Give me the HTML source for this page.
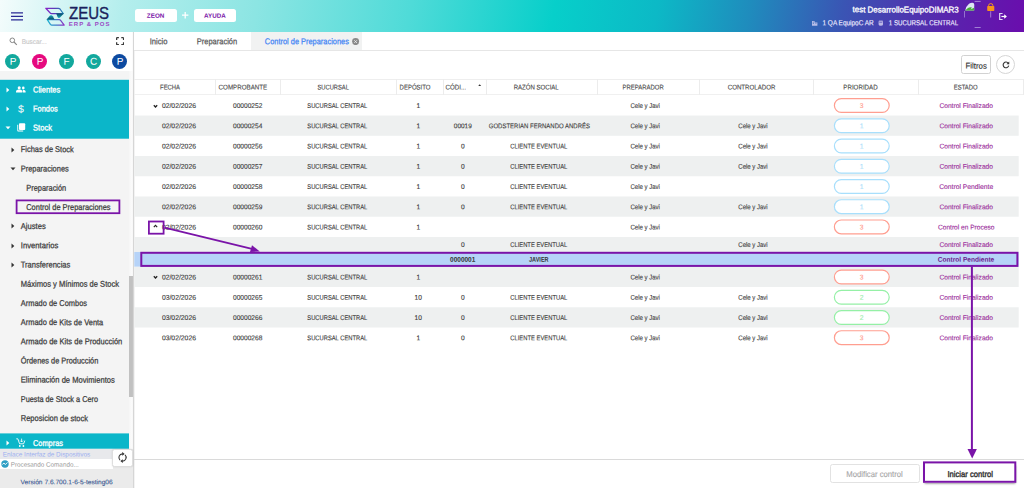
<!DOCTYPE html><html lang="es"><head><meta charset="utf-8"><title>Control de Preparaciones</title><style>
*{box-sizing:border-box}
html,body{margin:0;padding:0}
body{width:1024px;height:488px;position:relative;overflow:hidden;background:#fff;font-family:"Liberation Sans",sans-serif;color:#444}
.abs{position:absolute}
.t{position:absolute;white-space:nowrap;display:block;transform-origin:0 0}
#hdr{position:absolute;left:0;top:0;width:1024px;height:32px;
 background:linear-gradient(100deg,#f4fcfc 0%,#b4eeed 12%,#8ce5e3 25%,#4fdbd8 40%,#07cfca 54%,#0cb9c6 64%,#1f8cbd 73%,#3a55b4 82%,#5a22ad 93%,#6a0dad 100%)}
.hb{position:absolute;top:9px;height:13px;width:42.5px;background:#fff;border-radius:2.5px}
.circ{position:absolute;top:53.5px;width:15px;height:15px;border-radius:50%}
.row{position:absolute;left:134px;width:884.7px}
.sep{position:absolute;top:79px;width:1px;height:16px;background:#ececec}
.pill{position:absolute;left:833.8px;width:56px;height:14.9px;border-radius:7.5px;border:1.2px solid;background:#fff}
.p3{border-color:#ff9e90}
.p1{border-color:#a8dffc}
.p2{border-color:#95f0a6}
</style></head><body>
<div id="hdr">
<svg class="abs" style="left:11px;top:12px" width="12" height="9" viewBox="0 0 12 9"><path d="M0 0.8H12M0 4.3H12M0 7.8H12" stroke="#2a2a94" stroke-width="1.25" fill="none"/></svg>
<svg class="abs" style="left:40px;top:2px" width="76" height="28" viewBox="40 2 76 28">
<defs><linearGradient id="lg1" x1="0" y1="0" x2="1" y2="0"><stop offset="0" stop-color="#8a22c8"/><stop offset="0.5" stop-color="#5a3ab8"/><stop offset="1" stop-color="#1f86b8"/></linearGradient>
<linearGradient id="lg2" x1="0" y1="0" x2="1" y2="0"><stop offset="0" stop-color="#1fb4d0"/><stop offset="0.5" stop-color="#3a7ac8"/><stop offset="1" stop-color="#9030c4"/></linearGradient>
<linearGradient id="lg3" x1="0" y1="0" x2="1" y2="0"><stop offset="0" stop-color="#35c8e0"/><stop offset="1" stop-color="#9a40d0"/></linearGradient>
<linearGradient id="lg4" x1="0" y1="0" x2="0" y2="1"><stop offset="0" stop-color="#0a4a6a"/><stop offset="1" stop-color="#18a8b8"/></linearGradient>
<linearGradient id="lg5" x1="0" y1="1" x2="0" y2="0"><stop offset="0" stop-color="#0a4a6a"/><stop offset="1" stop-color="#18a8b8"/></linearGradient></defs>
<path d="M45.8 8.3H58.4Q59.4 8.3 60 9L63.2 13.5H51.4Q50.6 13.5 50 12.8Z" fill="none" stroke="url(#lg1)" stroke-width="1.25" stroke-linejoin="round"/>
<path d="M47.3 19.6H59.2Q60 19.6 60.6 20.3L64.2 25.1H51.8Q51 25.1 50.4 24.4Z" fill="none" stroke="url(#lg2)" stroke-width="1.25" stroke-linejoin="round"/>
<path d="M56.2 13.6H63.8L60 17.6Q58.6 18.6 57.6 17Z" fill="url(#lg4)"/>
<path d="M54.6 19.4H46.6L50 15.6Q51.6 14.6 52.8 16.2Z" fill="url(#lg5)"/>
<text x="69" y="18.6" font-family="Liberation Sans, sans-serif" font-size="16.4" fill="#1a1f5c" stroke="#1a1f5c" stroke-width="0.35" textLength="40" lengthAdjust="spacingAndGlyphs">ZEUS</text>
<path d="M69.7 13.1H85" stroke="url(#lg3)" stroke-width="0.8" opacity="0.85"/>
<text x="68.8" y="25.7" font-family="Liberation Sans, sans-serif" font-weight="bold" font-size="6" fill="#9a48c4" textLength="40.6" lengthAdjust="spacing">ERP &amp; POS</text>
</svg>
<div class="hb" style="left:134.5px"></div>
<span class="t" style="left:146px;top:11px;font-size:6.2px;line-height:7.44px;color:#7a14a8;transform:matrix(1.0219,0.0006,0,1,0.80,0.75);font-weight:bold;">ZEON</span>
<svg class="abs" style="left:182.2px;top:12.2px" width="6.4" height="6.4" viewBox="0 0 7 7"><path d="M3.5 0V7M0 3.5H7" stroke="#fff" stroke-width="1.4"/></svg>
<div class="hb" style="left:193.5px"></div>
<span class="t" style="left:204px;top:11px;font-size:6.2px;line-height:7.44px;color:#7a14a8;transform:matrix(1.0058,0.0006,0,1,0.10,0.75);font-weight:bold;">AYUDA</span>
<span class="t" style="left:852px;top:4px;font-size:8.4px;line-height:10.08px;color:#fff;transform:matrix(0.9514,0.0006,0,1,0.50,0.37);-webkit-text-stroke:0.3px #fff;">test DesarrolloEquipoDIMAR3</span>
<span class="t" style="left:822px;top:19px;font-size:7.3px;line-height:8.76px;color:#eeeaff;transform:matrix(0.8823,0.0006,0,1,0.50,0.16);-webkit-text-stroke:0.15px #eeeaff;">1 QA EquipoC AR</span>
<span class="t" style="left:888px;top:19px;font-size:7.3px;line-height:8.76px;color:#eeeaff;transform:matrix(0.8485,0.0006,0,1,0.80,0.16);-webkit-text-stroke:0.15px #eeeaff;">1 SUCURSAL CENTRAL</span>
<svg class="abs" style="left:811px;top:19px" width="76" height="8" viewBox="0 0 76 8" fill="#d9d4f4" opacity="0.8">
<path d="M1 6.8V2H3.6V3.6H6.4V6.8Z M1.8 2.8V3.5H2.8V2.8Z M1.8 4.3V5H2.8V4.3Z M4.3 4.4V5.1H5.5V4.4Z" fill-rule="evenodd"/>
<path d="M67.6 2.2H72V5.6Q72 6.8 69.8 6.8Q67.6 6.8 67.6 5.6Z M68.3 3.4V4.1H71.3V3.4Z" fill-rule="evenodd"/><path d="M67.9 1.6H71.7V2.2H67.9Z"/>
</svg>
<svg class="abs" style="left:958px;top:0" width="66" height="32" viewBox="958 0 66 32">
<defs><clipPath id="fc"><path d="M965.2 10.6 Q966 6.2 969 3.8 Q971.6 2 973.6 3 Q974.8 4.4 974.2 7 L974.2 10.6Z"/></clipPath></defs>
<g clip-path="url(#fc)"><rect x="964" y="2" width="12" height="9" fill="#dde6f4"/>
<path d="M964.5 11 L968 8 Q970 6.6 972 7.6 L970.6 9.6 L974.4 7.4 V11Z" fill="#4bb03a"/></g>
<path d="M964.5 11 V17.5" stroke="#cfc6ee" stroke-width="0.5"/>
<path d="M974.6 1.4 H980.7 M974.6 27.5 H980.7" stroke="#cfc6ee" stroke-width="0.6"/>
<rect x="987.2" y="6" width="7.1" height="4.9" rx="0.7" fill="#f7941d"/>
<path d="M988.6 6.4 V5.6 a2.15 2 0 0 1 4.3 0 V6.4" stroke="#f7941d" stroke-width="1" fill="none"/>
<path d="M990.7 11.3 V17.5" stroke="#e8defa" stroke-width="0.5"/>
<path d="M1002.6 13.5 H999.7 V19.5 H1002.6" stroke="#e2d6f6" stroke-width="1.2" fill="none"/>
<path d="M1001.4 16.5 H1004.6" stroke="#fff" stroke-width="1.2"/>
<path d="M1004.2 14.2 L1006.9 16.5 L1004.2 18.8Z" fill="#fff"/>
</svg>
</div>
<div class="abs" style="left:0;top:32px;width:133px;height:456px;background:#f4f4f4"></div>
<div class="abs" style="left:0;top:32px;width:133px;height:39px;background:#fff"></div>
<svg class="abs" style="left:9px;top:37px" width="9" height="9" viewBox="0 0 9 9"><circle cx="3.3" cy="3.3" r="2.3" stroke="#888" stroke-width="1" fill="none"/><path d="M5 5L7.8 7.8" stroke="#888" stroke-width="1.1"/></svg>
<span class="t" style="left:21px;top:38px;font-size:6.8px;line-height:8.16px;color:#c8c8c8;transform:matrix(0.9450,0.0006,0,1,0.70,0.03);-webkit-text-stroke:0.12px #c8c8c8;">Buscar...</span>
<svg class="abs" style="left:116.2px;top:37.2px" width="8.2" height="8.2" viewBox="0 0 9 9"><path d="M0.7 3.2V1.4Q0.7 0.7 1.4 0.7H3.2M5.8 0.7H7.6Q8.3 0.7 8.3 1.4V3.2M8.3 5.8V7.6Q8.3 8.3 7.6 8.3H5.8M3.2 8.3H1.4Q0.7 8.3 0.7 7.6V5.8" stroke="#3a3a3a" stroke-width="1.4" fill="none"/></svg>
<div class="circ" style="left:5.4px;background:#12a89d"></div>
<span class="t" style="left:9px;top:55px;font-size:10px;line-height:12.0px;color:#fff;transform:matrix(1.0000,0.0006,0,1,0.66,0.70);">P</span>
<div class="circ" style="left:32.4px;background:#e6097e"></div>
<span class="t" style="left:36px;top:55px;font-size:10px;line-height:12.0px;color:#fff;transform:matrix(1.0000,0.0006,0,1,0.66,0.70);">P</span>
<div class="circ" style="left:59px;background:#12a89d"></div>
<span class="t" style="left:63px;top:55px;font-size:10px;line-height:12.0px;color:#fff;transform:matrix(1.0000,0.0006,0,1,0.55,0.70);">F</span>
<div class="circ" style="left:85.9px;background:#12a89d"></div>
<span class="t" style="left:89px;top:55px;font-size:10px;line-height:12.0px;color:#fff;transform:matrix(1.0000,0.0006,0,1,0.89,0.70);">C</span>
<div class="circ" style="left:112.4px;background:#0d4aa0"></div>
<span class="t" style="left:116px;top:55px;font-size:10px;line-height:12.0px;color:#fff;transform:matrix(1.0000,0.0006,0,1,0.67,0.70);">P</span>
<svg class="abs" style="left:0;top:0" width="140" height="488" viewBox="0 0 140 488"><rect x="0" y="79.8" width="129" height="58.9" fill="#0bb6c9"/><rect x="0" y="433.4" width="129" height="15.3" fill="#0bb6c9"/></svg>
<svg class="abs" style="left:6px;top:86.5px" width="4" height="6" viewBox="0 0 4 6"><path d="M0.5 0.5L3.3 3L0.5 5.5Z" fill="#fff"/></svg>
<svg class="abs" style="left:16px;top:85.5px" width="10" height="7" viewBox="0 0 10 7"><circle cx="3.2" cy="1.7" r="1.5" fill="#fff"/><circle cx="7.3" cy="1.9" r="1.3" fill="#fff"/><path d="M0 6.5V5.3C0 4.2 2 3.6 3.2 3.6S6.4 4.2 6.4 5.3V6.5Z" fill="#fff"/><path d="M7 6.5V5.2C7 4.6 6.7 4.1 6.3 3.8 7.6 3.6 9.6 4.2 9.6 5.3V6.5Z" fill="#fff"/></svg>
<span class="t" style="left:33px;top:84px;font-size:8.5px;line-height:10.2px;color:#fff;transform:matrix(0.8874,0.0006,0,1,0.00,0.40);-webkit-text-stroke:0.3px #fff;">Clientes</span>
<svg class="abs" style="left:6px;top:105.5px" width="4" height="6" viewBox="0 0 4 6"><path d="M0.5 0.5L3.3 3L0.5 5.5Z" fill="#fff"/></svg>
<span class="t" style="left:18px;top:102px;font-size:10.5px;line-height:12.6px;color:#fff;transform:matrix(1.0000,0.0006,0,1,0.08,0.39);">$</span>
<span class="t" style="left:33px;top:103px;font-size:8.5px;line-height:10.2px;color:#fff;transform:matrix(0.8730,0.0006,0,1,0.00,0.40);-webkit-text-stroke:0.3px #fff;">Fondos</span>
<svg class="abs" style="left:5px;top:126px" width="6" height="4" viewBox="0 0 6 4"><path d="M0.5 0.5H5.5L3 3.3Z" fill="#fff"/></svg>
<svg class="abs" style="left:16.5px;top:123px" width="9" height="9" viewBox="0 0 9 9"><path d="M0.3 1.8V7.6Q0.3 8.5 1.2 8.5H6.2V7.6H1.2V1.8Z" fill="#fff"/><rect x="2" y="0.3" width="6.2" height="6.6" rx="0.9" fill="#fff"/></svg>
<span class="t" style="left:33px;top:122px;font-size:8.5px;line-height:10.2px;color:#fff;transform:matrix(0.8938,0.0006,0,1,0.00,0.40);-webkit-text-stroke:0.3px #fff;">Stock</span>
<span class="t" style="left:20px;top:144px;font-size:8.5px;line-height:10.2px;color:#3c3c3c;transform:matrix(0.8764,0.0006,0,1,0.75,0.10);-webkit-text-stroke:0.25px #3c3c3c;">Fichas de Stock</span>
<svg class="abs" style="left:10.5px;top:146.5px" width="4" height="6" viewBox="0 0 4 6"><path d="M0.5 0.5L3.3 3L0.5 5.5Z" fill="#333"/></svg>
<span class="t" style="left:20px;top:163px;font-size:8.5px;line-height:10.2px;color:#3c3c3c;transform:matrix(0.8757,0.0006,0,1,0.75,0.40);-webkit-text-stroke:0.25px #3c3c3c;">Preparaciones</span>
<svg class="abs" style="left:9.5px;top:166.8px" width="6" height="4" viewBox="0 0 6 4"><path d="M0.5 0.5H5.5L3 3.3Z" fill="#333"/></svg>
<span class="t" style="left:26px;top:182px;font-size:8.5px;line-height:10.2px;color:#3c3c3c;transform:matrix(0.8727,0.0006,0,1,0.25,0.70);-webkit-text-stroke:0.25px #3c3c3c;">Preparación</span>
<span class="t" style="left:26px;top:201px;font-size:8.5px;line-height:10.2px;color:#3c3c3c;transform:matrix(0.8741,0.0006,0,1,0.25,0.90);-webkit-text-stroke:0.25px #3c3c3c;">Control de Preparaciones</span>
<span class="t" style="left:20px;top:220px;font-size:8.5px;line-height:10.2px;color:#3c3c3c;transform:matrix(0.8969,0.0006,0,1,0.75,0.90);-webkit-text-stroke:0.25px #3c3c3c;">Ajustes</span>
<svg class="abs" style="left:10.5px;top:223.3px" width="4" height="6" viewBox="0 0 4 6"><path d="M0.5 0.5L3.3 3L0.5 5.5Z" fill="#333"/></svg>
<span class="t" style="left:20px;top:240px;font-size:8.5px;line-height:10.2px;color:#3c3c3c;transform:matrix(0.9019,0.0006,0,1,0.75,0.20);-webkit-text-stroke:0.25px #3c3c3c;">Inventarios</span>
<svg class="abs" style="left:10.5px;top:242.60000000000002px" width="4" height="6" viewBox="0 0 4 6"><path d="M0.5 0.5L3.3 3L0.5 5.5Z" fill="#333"/></svg>
<span class="t" style="left:20px;top:259px;font-size:8.5px;line-height:10.2px;color:#3c3c3c;transform:matrix(0.8855,0.0006,0,1,0.75,0.40);-webkit-text-stroke:0.25px #3c3c3c;">Transferencias</span>
<svg class="abs" style="left:10.5px;top:261.8px" width="4" height="6" viewBox="0 0 4 6"><path d="M0.5 0.5L3.3 3L0.5 5.5Z" fill="#333"/></svg>
<span class="t" style="left:20px;top:278px;font-size:8.5px;line-height:10.2px;color:#3c3c3c;transform:matrix(0.8889,0.0006,0,1,0.75,0.70);-webkit-text-stroke:0.25px #3c3c3c;">Máximos y Mínimos de Stock</span>
<span class="t" style="left:20px;top:297px;font-size:8.5px;line-height:10.2px;color:#3c3c3c;transform:matrix(0.8764,0.0006,0,1,0.75,0.90);-webkit-text-stroke:0.25px #3c3c3c;">Armado de Combos</span>
<span class="t" style="left:20px;top:317px;font-size:8.5px;line-height:10.2px;color:#3c3c3c;transform:matrix(0.8774,0.0006,0,1,0.75,0.10);-webkit-text-stroke:0.25px #3c3c3c;">Armado de Kits de Venta</span>
<span class="t" style="left:20px;top:336px;font-size:8.5px;line-height:10.2px;color:#3c3c3c;transform:matrix(0.8840,0.0006,0,1,0.75,0.20);-webkit-text-stroke:0.25px #3c3c3c;">Armado de Kits de Producción</span>
<span class="t" style="left:20px;top:355px;font-size:8.5px;line-height:10.2px;color:#3c3c3c;transform:matrix(0.8678,0.0006,0,1,0.75,0.40);-webkit-text-stroke:0.25px #3c3c3c;">Órdenes de Producción</span>
<span class="t" style="left:20px;top:374px;font-size:8.5px;line-height:10.2px;color:#3c3c3c;transform:matrix(0.8923,0.0006,0,1,0.75,0.60);-webkit-text-stroke:0.25px #3c3c3c;">Eliminación de Movimientos</span>
<span class="t" style="left:20px;top:393px;font-size:8.5px;line-height:10.2px;color:#3c3c3c;transform:matrix(0.8605,0.0006,0,1,0.75,0.90);-webkit-text-stroke:0.25px #3c3c3c;">Puesta de Stock a Cero</span>
<span class="t" style="left:20px;top:413px;font-size:8.5px;line-height:10.2px;color:#3c3c3c;transform:matrix(0.8841,0.0006,0,1,0.75,0.10);-webkit-text-stroke:0.25px #3c3c3c;">Reposicion de stock</span>
<svg class="abs" style="left:6px;top:440px" width="4" height="6" viewBox="0 0 4 6"><path d="M0.5 0.5L3.3 3L0.5 5.5Z" fill="#fff"/></svg>
<svg class="abs" style="left:16px;top:437.5px" width="10" height="10" viewBox="0 0 10 10"><path d="M0.3 0.8H1.8L3.6 5.8H7.6L8.8 2.6" stroke="#fff" stroke-width="0.9" fill="none"/><circle cx="3.8" cy="8" r="0.9" fill="#fff"/><circle cx="7.4" cy="8" r="0.9" fill="#fff"/><path d="M5.6 0.6V4M4.2 2.6L5.6 4L7 2.6" stroke="#fff" stroke-width="0.8" fill="none"/></svg>
<span class="t" style="left:33px;top:437px;font-size:8.5px;line-height:10.2px;color:#fff;transform:matrix(0.8700,0.0006,0,1,0.00,0.90);-webkit-text-stroke:0.3px #fff;">Compras</span>
<div class="abs" style="left:129px;top:71px;width:4px;height:378px;background:linear-gradient(90deg,#f6f6f6,#fdfdfd)"></div>
<div class="abs" style="left:129.3px;top:276px;width:3.6px;height:121px;background:#c1c1c1"></div>
<svg class="abs" style="left:130px;top:32px" width="6" height="456" viewBox="130 32 6 456"><rect x="132.9" y="32" width="1.4" height="456" fill="#d6d6d6"/></svg>
<div class="abs" style="left:0;top:449px;width:133px;height:39px;background:#ebebeb"></div>
<div class="abs" style="left:0;top:449px;width:113px;height:10px;background:#e8e9ec"></div>
<span class="t" style="left:2px;top:450px;font-size:6.6px;line-height:7.92px;color:#9db0f0;transform:matrix(0.9696,0.0006,0,1,0.80,0.56);">Enlace Interfaz de Dispositivos</span>
<div class="abs" style="left:0;top:459px;width:113px;height:9.5px;background:#fff"></div>
<svg class="abs" style="left:0.5px;top:460px" width="8" height="8" viewBox="0 0 8 8"><circle cx="4" cy="4" r="3.7" fill="#2f9fc4"/><path d="M1.3 4.5L3 3L4.3 4.6L6.5 2.4" stroke="#fff" stroke-width="0.9" fill="none"/></svg>
<span class="t" style="left:10px;top:460px;font-size:6.6px;line-height:7.92px;color:#999;transform:matrix(0.9554,0.0006,0,1,0.70,0.66);">Procesando Comando...</span>
<div class="abs" style="left:112.3px;top:448.8px;width:20.8px;height:18.4px;background:#fff;border:1px solid #dedede;border-radius:2.5px;box-shadow:0 0 1.5px rgba(0,0,0,.15)"></div>
<svg class="abs" style="left:117.1px;top:452.4px" width="11" height="11" viewBox="0 0 11 11"><path d="M2.95 8.05A3.6 3.6 0 0 1 5.5 1.9M8.05 2.95A3.6 3.6 0 0 1 5.5 9.1" stroke="#333" stroke-width="1.1" fill="none"/><path d="M5.2 0.1L7.7 1.9L5.2 3.7ZM5.8 7.3L3.3 9.1L5.8 10.9Z" fill="#333"/></svg>
<span class="t" style="left:20px;top:478px;font-size:6.6px;line-height:7.92px;color:#35558f;transform:matrix(1.0022,0.0006,0,1,0.50,0.26);-webkit-text-stroke:0.1px #35558f;">Versión 7.6.700.1-6-5-testing06</span>
<div class="abs" style="left:134px;top:32px;width:890px;height:18.9px;background:#fff;border-bottom:1px solid #e6e6e6"></div>
<div class="abs" style="left:251.2px;top:32px;width:111.3px;height:18.2px;background:#f1f2f2"></div>
<span class="t" style="left:149px;top:36px;font-size:8.5px;line-height:10.2px;color:#5a5a5a;transform:matrix(0.8970,0.0006,0,1,0.70,0.30);-webkit-text-stroke:0.25px #5a5a5a;">Inicio</span>
<span class="t" style="left:196px;top:36px;font-size:8.5px;line-height:10.2px;color:#5a5a5a;transform:matrix(0.8793,0.0006,0,1,0.80,0.30);-webkit-text-stroke:0.25px #5a5a5a;">Preparación</span>
<span class="t" style="left:264px;top:36px;font-size:8.5px;line-height:10.2px;color:#4285f4;transform:matrix(0.8725,0.0006,0,1,0.80,0.30);-webkit-text-stroke:0.25px #4285f4;">Control de Preparaciones</span>
<svg class="abs" style="left:352.4px;top:37.7px" width="7.2" height="7.2" viewBox="0 0 7 7"><circle cx="3.5" cy="3.5" r="3.4" fill="#8a8a8a"/><path d="M2.2 2.2L4.8 4.8M4.8 2.2L2.2 4.8" stroke="#f3f3f3" stroke-width="0.8"/></svg>
<div class="abs" style="left:961px;top:55.3px;width:30.3px;height:19.2px;border:1px solid #d2d2d2;border-radius:2.5px"></div>
<span class="t" style="left:965px;top:61px;font-size:8.3px;line-height:9.96px;color:#333;transform:matrix(0.9383,0.0006,0,1,0.60,0.62);-webkit-text-stroke:0.15px #333;">Filtros</span>
<div class="abs" style="left:996.3px;top:55.3px;width:19.2px;height:19.2px;border:1px solid #d6d6d6;border-radius:50%"></div>
<svg class="abs" style="left:1002px;top:60.8px" width="7.8" height="7.8" viewBox="0 0 9 9"><path d="M7.3 2.6A3.3 3.3 0 1 0 7.8 5.4" stroke="#333" stroke-width="1.25" fill="none"/><path d="M8.4 0.5V3.8H5.1Z" fill="#333"/></svg>
<div class="abs" style="left:134px;top:78.6px;width:890px;height:16.4px;border-top:1px solid #eeeeee;border-bottom:1px solid #f0f0f0"></div>
<div class="sep" style="left:215.1px"></div>
<div class="sep" style="left:280.0px"></div>
<div class="sep" style="left:396.1px"></div>
<div class="sep" style="left:443.2px"></div>
<div class="sep" style="left:485.8px"></div>
<div class="sep" style="left:596.5px"></div>
<div class="sep" style="left:699.1px"></div>
<div class="sep" style="left:813.1px"></div>
<div class="sep" style="left:917.9px"></div>
<div class="sep" style="left:1022.5px"></div>
<span class="t" style="left:160px;top:83px;font-size:6.8px;line-height:8.16px;color:#4a4a4a;transform:matrix(0.8635,0.0006,0,1,0.05,0.58);-webkit-text-stroke:0.12px #4a4a4a;">FECHA</span>
<span class="t" style="left:218px;top:83px;font-size:6.8px;line-height:8.16px;color:#4a4a4a;transform:matrix(0.9123,0.0006,0,1,0.60,0.58);-webkit-text-stroke:0.12px #4a4a4a;">COMPROBANTE</span>
<span class="t" style="left:317px;top:83px;font-size:6.8px;line-height:8.16px;color:#4a4a4a;transform:matrix(0.8506,0.0006,0,1,0.45,0.58);-webkit-text-stroke:0.12px #4a4a4a;">SUCURSAL</span>
<span class="t" style="left:399px;top:83px;font-size:6.8px;line-height:8.16px;color:#4a4a4a;transform:matrix(0.8824,0.0006,0,1,0.55,0.58);-webkit-text-stroke:0.12px #4a4a4a;">DEPÓSITO</span>
<span class="t" style="left:445px;top:83px;font-size:6.8px;line-height:8.16px;color:#4a4a4a;transform:matrix(0.9000,0.0006,0,1,0.60,0.58);-webkit-text-stroke:0.12px #4a4a4a;">CÓDI...</span>
<svg class="abs" style="left:478.4px;top:84px" width="3.4" height="2.4" viewBox="0 0 4 3"><path d="M0 2.8L2 0.2L4 2.8Z" fill="#333"/></svg>
<span class="t" style="left:513px;top:83px;font-size:6.8px;line-height:8.16px;color:#4a4a4a;transform:matrix(0.8907,0.0006,0,1,0.65,0.58);-webkit-text-stroke:0.12px #4a4a4a;">RAZÓN SOCIAL</span>
<span class="t" style="left:622px;top:83px;font-size:6.8px;line-height:8.16px;color:#4a4a4a;transform:matrix(0.8746,0.0006,0,1,0.60,0.58);-webkit-text-stroke:0.12px #4a4a4a;">PREPARADOR</span>
<span class="t" style="left:727px;top:83px;font-size:6.8px;line-height:8.16px;color:#4a4a4a;transform:matrix(0.9037,0.0006,0,1,0.70,0.58);-webkit-text-stroke:0.12px #4a4a4a;">CONTROLADOR</span>
<span class="t" style="left:843px;top:83px;font-size:6.8px;line-height:8.16px;color:#4a4a4a;transform:matrix(0.9105,0.0006,0,1,0.30,0.58);-webkit-text-stroke:0.12px #4a4a4a;">PRIORIDAD</span>
<span class="t" style="left:953px;top:83px;font-size:6.8px;line-height:8.16px;color:#4a4a4a;transform:matrix(0.8668,0.0006,0,1,0.80,0.58);-webkit-text-stroke:0.12px #4a4a4a;">ESTADO</span>
<svg class="abs" style="left:0;top:0" width="1024" height="488" viewBox="0 0 1024 488"><rect x="134.3" y="115.54" width="884.4" height="20.24" fill="#eef0f0"/><rect x="134.3" y="156.02" width="884.4" height="20.24" fill="#eef0f0"/><rect x="134.3" y="196.50" width="884.4" height="20.24" fill="#eef0f0"/><rect x="134.3" y="236.98" width="884.4" height="15.00" fill="#eef0f0"/><rect x="134.3" y="251.98" width="884.4" height="14.80" fill="#b6d3f8"/><rect x="134.3" y="266.78" width="884.4" height="20.24" fill="#eef0f0"/><rect x="134.3" y="307.26" width="884.4" height="20.24" fill="#eef0f0"/><rect x="834.4" y="98.57" width="54.8" height="13.8" rx="6.9" fill="#fff" stroke="#ff9e90" stroke-width="1.2"/><rect x="834.4" y="118.81" width="54.8" height="13.8" rx="6.9" fill="#fff" stroke="#a8dffc" stroke-width="1.2"/><rect x="834.4" y="139.05" width="54.8" height="13.8" rx="6.9" fill="#fff" stroke="#a8dffc" stroke-width="1.2"/><rect x="834.4" y="159.29" width="54.8" height="13.8" rx="6.9" fill="#fff" stroke="#a8dffc" stroke-width="1.2"/><rect x="834.4" y="179.53" width="54.8" height="13.8" rx="6.9" fill="#fff" stroke="#a8dffc" stroke-width="1.2"/><rect x="834.4" y="199.77" width="54.8" height="13.8" rx="6.9" fill="#fff" stroke="#a8dffc" stroke-width="1.2"/><rect x="834.4" y="220.01" width="54.8" height="13.8" rx="6.9" fill="#fff" stroke="#ff9e90" stroke-width="1.2"/><rect x="834.4" y="270.05" width="54.8" height="13.8" rx="6.9" fill="#fff" stroke="#ff9e90" stroke-width="1.2"/><rect x="834.4" y="290.29" width="54.8" height="13.8" rx="6.9" fill="#fff" stroke="#95f0a6" stroke-width="1.2"/><rect x="834.4" y="310.53" width="54.8" height="13.8" rx="6.9" fill="#fff" stroke="#95f0a6" stroke-width="1.2"/><rect x="834.4" y="330.77" width="54.8" height="13.8" rx="6.9" fill="#fff" stroke="#ff9e90" stroke-width="1.2"/></svg>
<svg class="abs" style="left:153.2px;top:103.97px" width="5" height="4.4" viewBox="0 0 5 4.4"><path d="M0.8 1.3L2.5 3L4.2 1.3" stroke="#222" stroke-width="1.35" fill="none"/></svg>
<span class="t" style="left:161px;top:102px;font-size:6.8px;line-height:8.16px;color:#3e3e3e;transform:matrix(1.0020,0.0006,0,1,0.90,0.00);-webkit-text-stroke:0.12px #3e3e3e;">02/02/2026</span>
<span class="t" style="left:233px;top:102px;font-size:6.8px;line-height:8.16px;color:#3e3e3e;transform:matrix(0.9684,0.0006,0,1,0.05,0.00);-webkit-text-stroke:0.12px #3e3e3e;">00000252</span>
<span class="t" style="left:307px;top:102px;font-size:6.8px;line-height:8.16px;color:#3e3e3e;transform:matrix(0.8522,0.0006,0,1,0.30,0.00);-webkit-text-stroke:0.12px #3e3e3e;">SUCURSAL CENTRAL</span>
<span class="t" style="left:416px;top:102px;font-size:6.8px;line-height:8.16px;color:#3e3e3e;transform:matrix(0.9784,0.0006,0,1,0.45,0.00);-webkit-text-stroke:0.12px #3e3e3e;">1</span>
<span class="t" style="left:630px;top:102px;font-size:6.8px;line-height:8.16px;color:#3e3e3e;transform:matrix(0.8840,0.0006,0,1,0.50,0.00);-webkit-text-stroke:0.12px #3e3e3e;">Cele y Javi</span>
<span class="t" style="left:859px;top:102px;font-size:6.8px;line-height:8.16px;color:#ffa192;transform:matrix(1.0000,0.0006,0,1,0.71,0.00);-webkit-text-stroke:0.12px #ffa192;">3</span>
<span class="t" style="left:939px;top:102px;font-size:6.8px;line-height:8.16px;color:#9c2f9c;transform:matrix(0.9780,0.0006,0,1,0.40,0.00);-webkit-text-stroke:0.12px #9c2f9c;">Control Finalizado</span>
<span class="t" style="left:161px;top:122px;font-size:6.8px;line-height:8.16px;color:#3e3e3e;transform:matrix(1.0020,0.0006,0,1,0.90,0.24);-webkit-text-stroke:0.12px #3e3e3e;">02/02/2026</span>
<span class="t" style="left:233px;top:122px;font-size:6.8px;line-height:8.16px;color:#3e3e3e;transform:matrix(0.9684,0.0006,0,1,0.05,0.24);-webkit-text-stroke:0.12px #3e3e3e;">00000254</span>
<span class="t" style="left:307px;top:122px;font-size:6.8px;line-height:8.16px;color:#3e3e3e;transform:matrix(0.8522,0.0006,0,1,0.30,0.24);-webkit-text-stroke:0.12px #3e3e3e;">SUCURSAL CENTRAL</span>
<span class="t" style="left:416px;top:122px;font-size:6.8px;line-height:8.16px;color:#3e3e3e;transform:matrix(0.9784,0.0006,0,1,0.45,0.24);-webkit-text-stroke:0.12px #3e3e3e;">1</span>
<span class="t" style="left:453px;top:122px;font-size:6.8px;line-height:8.16px;color:#3e3e3e;transform:matrix(0.9519,0.0006,0,1,0.80,0.24);-webkit-text-stroke:0.12px #3e3e3e;">00019</span>
<span class="t" style="left:488px;top:122px;font-size:6.8px;line-height:8.16px;color:#3e3e3e;transform:matrix(0.8811,0.0006,0,1,0.80,0.24);-webkit-text-stroke:0.12px #3e3e3e;">GODSTERIAN FERNANDO ANDRÉS</span>
<span class="t" style="left:630px;top:122px;font-size:6.8px;line-height:8.16px;color:#3e3e3e;transform:matrix(0.8840,0.0006,0,1,0.50,0.24);-webkit-text-stroke:0.12px #3e3e3e;">Cele y Javi</span>
<span class="t" style="left:738px;top:122px;font-size:6.8px;line-height:8.16px;color:#3e3e3e;transform:matrix(0.8840,0.0006,0,1,0.30,0.24);-webkit-text-stroke:0.12px #3e3e3e;">Cele y Javi</span>
<span class="t" style="left:859px;top:122px;font-size:6.8px;line-height:8.16px;color:#b0e2fc;transform:matrix(1.0000,0.0006,0,1,0.71,0.24);-webkit-text-stroke:0.12px #b0e2fc;">1</span>
<span class="t" style="left:939px;top:122px;font-size:6.8px;line-height:8.16px;color:#9c2f9c;transform:matrix(0.9780,0.0006,0,1,0.40,0.24);-webkit-text-stroke:0.12px #9c2f9c;">Control Finalizado</span>
<span class="t" style="left:161px;top:142px;font-size:6.8px;line-height:8.16px;color:#3e3e3e;transform:matrix(1.0020,0.0006,0,1,0.90,0.48);-webkit-text-stroke:0.12px #3e3e3e;">02/02/2026</span>
<span class="t" style="left:233px;top:142px;font-size:6.8px;line-height:8.16px;color:#3e3e3e;transform:matrix(0.9684,0.0006,0,1,0.05,0.48);-webkit-text-stroke:0.12px #3e3e3e;">00000256</span>
<span class="t" style="left:307px;top:142px;font-size:6.8px;line-height:8.16px;color:#3e3e3e;transform:matrix(0.8522,0.0006,0,1,0.30,0.48);-webkit-text-stroke:0.12px #3e3e3e;">SUCURSAL CENTRAL</span>
<span class="t" style="left:416px;top:142px;font-size:6.8px;line-height:8.16px;color:#3e3e3e;transform:matrix(0.9784,0.0006,0,1,0.45,0.48);-webkit-text-stroke:0.12px #3e3e3e;">1</span>
<span class="t" style="left:460px;top:142px;font-size:6.8px;line-height:8.16px;color:#3e3e3e;transform:matrix(0.9784,0.0006,0,1,0.95,0.48);-webkit-text-stroke:0.12px #3e3e3e;">0</span>
<span class="t" style="left:510px;top:142px;font-size:6.8px;line-height:8.16px;color:#3e3e3e;transform:matrix(0.8571,0.0006,0,1,0.30,0.48);-webkit-text-stroke:0.12px #3e3e3e;">CLIENTE EVENTUAL</span>
<span class="t" style="left:630px;top:142px;font-size:6.8px;line-height:8.16px;color:#3e3e3e;transform:matrix(0.8840,0.0006,0,1,0.50,0.48);-webkit-text-stroke:0.12px #3e3e3e;">Cele y Javi</span>
<span class="t" style="left:738px;top:142px;font-size:6.8px;line-height:8.16px;color:#3e3e3e;transform:matrix(0.8840,0.0006,0,1,0.30,0.48);-webkit-text-stroke:0.12px #3e3e3e;">Cele y Javi</span>
<span class="t" style="left:859px;top:142px;font-size:6.8px;line-height:8.16px;color:#b0e2fc;transform:matrix(1.0000,0.0006,0,1,0.71,0.48);-webkit-text-stroke:0.12px #b0e2fc;">1</span>
<span class="t" style="left:939px;top:142px;font-size:6.8px;line-height:8.16px;color:#9c2f9c;transform:matrix(0.9780,0.0006,0,1,0.40,0.48);-webkit-text-stroke:0.12px #9c2f9c;">Control Finalizado</span>
<span class="t" style="left:161px;top:162px;font-size:6.8px;line-height:8.16px;color:#3e3e3e;transform:matrix(1.0020,0.0006,0,1,0.90,0.72);-webkit-text-stroke:0.12px #3e3e3e;">02/02/2026</span>
<span class="t" style="left:233px;top:162px;font-size:6.8px;line-height:8.16px;color:#3e3e3e;transform:matrix(0.9684,0.0006,0,1,0.05,0.72);-webkit-text-stroke:0.12px #3e3e3e;">00000257</span>
<span class="t" style="left:307px;top:162px;font-size:6.8px;line-height:8.16px;color:#3e3e3e;transform:matrix(0.8522,0.0006,0,1,0.30,0.72);-webkit-text-stroke:0.12px #3e3e3e;">SUCURSAL CENTRAL</span>
<span class="t" style="left:416px;top:162px;font-size:6.8px;line-height:8.16px;color:#3e3e3e;transform:matrix(0.9784,0.0006,0,1,0.45,0.72);-webkit-text-stroke:0.12px #3e3e3e;">1</span>
<span class="t" style="left:460px;top:162px;font-size:6.8px;line-height:8.16px;color:#3e3e3e;transform:matrix(0.9784,0.0006,0,1,0.95,0.72);-webkit-text-stroke:0.12px #3e3e3e;">0</span>
<span class="t" style="left:510px;top:162px;font-size:6.8px;line-height:8.16px;color:#3e3e3e;transform:matrix(0.8571,0.0006,0,1,0.30,0.72);-webkit-text-stroke:0.12px #3e3e3e;">CLIENTE EVENTUAL</span>
<span class="t" style="left:630px;top:162px;font-size:6.8px;line-height:8.16px;color:#3e3e3e;transform:matrix(0.8840,0.0006,0,1,0.50,0.72);-webkit-text-stroke:0.12px #3e3e3e;">Cele y Javi</span>
<span class="t" style="left:738px;top:162px;font-size:6.8px;line-height:8.16px;color:#3e3e3e;transform:matrix(0.8840,0.0006,0,1,0.30,0.72);-webkit-text-stroke:0.12px #3e3e3e;">Cele y Javi</span>
<span class="t" style="left:859px;top:162px;font-size:6.8px;line-height:8.16px;color:#b0e2fc;transform:matrix(1.0000,0.0006,0,1,0.71,0.72);-webkit-text-stroke:0.12px #b0e2fc;">1</span>
<span class="t" style="left:939px;top:162px;font-size:6.8px;line-height:8.16px;color:#9c2f9c;transform:matrix(0.9780,0.0006,0,1,0.40,0.72);-webkit-text-stroke:0.12px #9c2f9c;">Control Finalizado</span>
<span class="t" style="left:161px;top:182px;font-size:6.8px;line-height:8.16px;color:#3e3e3e;transform:matrix(1.0020,0.0006,0,1,0.90,0.96);-webkit-text-stroke:0.12px #3e3e3e;">02/02/2026</span>
<span class="t" style="left:233px;top:182px;font-size:6.8px;line-height:8.16px;color:#3e3e3e;transform:matrix(0.9684,0.0006,0,1,0.05,0.96);-webkit-text-stroke:0.12px #3e3e3e;">00000258</span>
<span class="t" style="left:307px;top:182px;font-size:6.8px;line-height:8.16px;color:#3e3e3e;transform:matrix(0.8522,0.0006,0,1,0.30,0.96);-webkit-text-stroke:0.12px #3e3e3e;">SUCURSAL CENTRAL</span>
<span class="t" style="left:416px;top:182px;font-size:6.8px;line-height:8.16px;color:#3e3e3e;transform:matrix(0.9784,0.0006,0,1,0.45,0.96);-webkit-text-stroke:0.12px #3e3e3e;">1</span>
<span class="t" style="left:460px;top:182px;font-size:6.8px;line-height:8.16px;color:#3e3e3e;transform:matrix(0.9784,0.0006,0,1,0.95,0.96);-webkit-text-stroke:0.12px #3e3e3e;">0</span>
<span class="t" style="left:510px;top:182px;font-size:6.8px;line-height:8.16px;color:#3e3e3e;transform:matrix(0.8571,0.0006,0,1,0.30,0.96);-webkit-text-stroke:0.12px #3e3e3e;">CLIENTE EVENTUAL</span>
<span class="t" style="left:630px;top:182px;font-size:6.8px;line-height:8.16px;color:#3e3e3e;transform:matrix(0.8840,0.0006,0,1,0.50,0.96);-webkit-text-stroke:0.12px #3e3e3e;">Cele y Javi</span>
<span class="t" style="left:859px;top:182px;font-size:6.8px;line-height:8.16px;color:#b0e2fc;transform:matrix(1.0000,0.0006,0,1,0.71,0.96);-webkit-text-stroke:0.12px #b0e2fc;">1</span>
<span class="t" style="left:939px;top:182px;font-size:6.8px;line-height:8.16px;color:#9c2f9c;transform:matrix(0.9938,0.0006,0,1,0.15,0.96);-webkit-text-stroke:0.12px #9c2f9c;">Control Pendiente</span>
<span class="t" style="left:161px;top:203px;font-size:6.8px;line-height:8.16px;color:#3e3e3e;transform:matrix(1.0020,0.0006,0,1,0.90,0.20);-webkit-text-stroke:0.12px #3e3e3e;">02/02/2026</span>
<span class="t" style="left:233px;top:203px;font-size:6.8px;line-height:8.16px;color:#3e3e3e;transform:matrix(0.9684,0.0006,0,1,0.05,0.20);-webkit-text-stroke:0.12px #3e3e3e;">00000259</span>
<span class="t" style="left:307px;top:203px;font-size:6.8px;line-height:8.16px;color:#3e3e3e;transform:matrix(0.8522,0.0006,0,1,0.30,0.20);-webkit-text-stroke:0.12px #3e3e3e;">SUCURSAL CENTRAL</span>
<span class="t" style="left:416px;top:203px;font-size:6.8px;line-height:8.16px;color:#3e3e3e;transform:matrix(0.9784,0.0006,0,1,0.45,0.20);-webkit-text-stroke:0.12px #3e3e3e;">1</span>
<span class="t" style="left:460px;top:203px;font-size:6.8px;line-height:8.16px;color:#3e3e3e;transform:matrix(0.9784,0.0006,0,1,0.95,0.20);-webkit-text-stroke:0.12px #3e3e3e;">0</span>
<span class="t" style="left:510px;top:203px;font-size:6.8px;line-height:8.16px;color:#3e3e3e;transform:matrix(0.8571,0.0006,0,1,0.30,0.20);-webkit-text-stroke:0.12px #3e3e3e;">CLIENTE EVENTUAL</span>
<span class="t" style="left:630px;top:203px;font-size:6.8px;line-height:8.16px;color:#3e3e3e;transform:matrix(0.8840,0.0006,0,1,0.50,0.20);-webkit-text-stroke:0.12px #3e3e3e;">Cele y Javi</span>
<span class="t" style="left:738px;top:203px;font-size:6.8px;line-height:8.16px;color:#3e3e3e;transform:matrix(0.8840,0.0006,0,1,0.30,0.20);-webkit-text-stroke:0.12px #3e3e3e;">Cele y Javi</span>
<span class="t" style="left:859px;top:203px;font-size:6.8px;line-height:8.16px;color:#b0e2fc;transform:matrix(1.0000,0.0006,0,1,0.71,0.20);-webkit-text-stroke:0.12px #b0e2fc;">1</span>
<span class="t" style="left:939px;top:203px;font-size:6.8px;line-height:8.16px;color:#9c2f9c;transform:matrix(0.9780,0.0006,0,1,0.40,0.20);-webkit-text-stroke:0.12px #9c2f9c;">Control Finalizado</span>
<svg class="abs" style="left:153.39999999999998px;top:224.36px" width="5" height="4.4" viewBox="0 0 5 4.4"><path d="M0.8 3.1L2.5 1.4L4.2 3.1" stroke="#222" stroke-width="1.2" fill="none"/></svg>
<span class="t" style="left:161px;top:223px;font-size:6.8px;line-height:8.16px;color:#3e3e3e;transform:matrix(1.0020,0.0006,0,1,0.90,0.44);-webkit-text-stroke:0.12px #3e3e3e;">02/02/2026</span>
<span class="t" style="left:233px;top:223px;font-size:6.8px;line-height:8.16px;color:#3e3e3e;transform:matrix(0.9684,0.0006,0,1,0.05,0.44);-webkit-text-stroke:0.12px #3e3e3e;">00000260</span>
<span class="t" style="left:307px;top:223px;font-size:6.8px;line-height:8.16px;color:#3e3e3e;transform:matrix(0.8522,0.0006,0,1,0.30,0.44);-webkit-text-stroke:0.12px #3e3e3e;">SUCURSAL CENTRAL</span>
<span class="t" style="left:416px;top:223px;font-size:6.8px;line-height:8.16px;color:#3e3e3e;transform:matrix(0.9784,0.0006,0,1,0.45,0.44);-webkit-text-stroke:0.12px #3e3e3e;">1</span>
<span class="t" style="left:630px;top:223px;font-size:6.8px;line-height:8.16px;color:#3e3e3e;transform:matrix(0.8840,0.0006,0,1,0.50,0.44);-webkit-text-stroke:0.12px #3e3e3e;">Cele y Javi</span>
<span class="t" style="left:859px;top:223px;font-size:6.8px;line-height:8.16px;color:#ffa192;transform:matrix(1.0000,0.0006,0,1,0.71,0.44);-webkit-text-stroke:0.12px #ffa192;">3</span>
<span class="t" style="left:937px;top:223px;font-size:6.8px;line-height:8.16px;color:#9c2f9c;transform:matrix(0.9706,0.0006,0,1,0.95,0.44);-webkit-text-stroke:0.12px #9c2f9c;">Control en Proceso</span>
<span class="t" style="left:460px;top:240px;font-size:6.8px;line-height:8.16px;color:#3e3e3e;transform:matrix(0.9784,0.0006,0,1,0.95,0.91);-webkit-text-stroke:0.12px #3e3e3e;">0</span>
<span class="t" style="left:510px;top:240px;font-size:6.8px;line-height:8.16px;color:#3e3e3e;transform:matrix(0.8571,0.0006,0,1,0.20,0.91);-webkit-text-stroke:0.12px #3e3e3e;">CLIENTE EVENTUAL</span>
<span class="t" style="left:738px;top:240px;font-size:6.8px;line-height:8.16px;color:#3e3e3e;transform:matrix(0.8840,0.0006,0,1,0.30,0.91);-webkit-text-stroke:0.12px #3e3e3e;">Cele y Javi</span>
<span class="t" style="left:939px;top:240px;font-size:6.8px;line-height:8.16px;color:#9c2f9c;transform:matrix(0.9780,0.0006,0,1,0.40,0.91);-webkit-text-stroke:0.12px #9c2f9c;">Control Finalizado</span>
<span class="t" style="left:450px;top:255px;font-size:6.8px;line-height:8.16px;color:#333;transform:matrix(0.9519,0.0006,0,1,0.10,0.71);font-weight:bold;">0000001</span>
<span class="t" style="left:529px;top:255px;font-size:6.8px;line-height:8.16px;color:#333;transform:matrix(0.8147,0.0006,0,1,0.00,0.71);font-weight:bold;">JAVIER</span>
<span class="t" style="left:937px;top:255px;font-size:6.8px;line-height:8.16px;color:#6d1a8c;transform:matrix(0.9649,0.0006,0,1,0.75,0.71);font-weight:bold;">Control Pendiente</span>
<svg class="abs" style="left:153.2px;top:275.45px" width="5" height="4.4" viewBox="0 0 5 4.4"><path d="M0.8 1.3L2.5 3L4.2 1.3" stroke="#222" stroke-width="1.35" fill="none"/></svg>
<span class="t" style="left:161px;top:273px;font-size:6.8px;line-height:8.16px;color:#3e3e3e;transform:matrix(1.0020,0.0006,0,1,0.90,0.48);-webkit-text-stroke:0.12px #3e3e3e;">02/02/2026</span>
<span class="t" style="left:233px;top:273px;font-size:6.8px;line-height:8.16px;color:#3e3e3e;transform:matrix(0.9684,0.0006,0,1,0.05,0.48);-webkit-text-stroke:0.12px #3e3e3e;">00000261</span>
<span class="t" style="left:307px;top:273px;font-size:6.8px;line-height:8.16px;color:#3e3e3e;transform:matrix(0.8522,0.0006,0,1,0.30,0.48);-webkit-text-stroke:0.12px #3e3e3e;">SUCURSAL CENTRAL</span>
<span class="t" style="left:416px;top:273px;font-size:6.8px;line-height:8.16px;color:#3e3e3e;transform:matrix(0.9784,0.0006,0,1,0.45,0.48);-webkit-text-stroke:0.12px #3e3e3e;">1</span>
<span class="t" style="left:630px;top:273px;font-size:6.8px;line-height:8.16px;color:#3e3e3e;transform:matrix(0.8840,0.0006,0,1,0.50,0.48);-webkit-text-stroke:0.12px #3e3e3e;">Cele y Javi</span>
<span class="t" style="left:859px;top:273px;font-size:6.8px;line-height:8.16px;color:#ffa192;transform:matrix(1.0000,0.0006,0,1,0.71,0.48);-webkit-text-stroke:0.12px #ffa192;">3</span>
<span class="t" style="left:939px;top:273px;font-size:6.8px;line-height:8.16px;color:#9c2f9c;transform:matrix(0.9780,0.0006,0,1,0.40,0.48);-webkit-text-stroke:0.12px #9c2f9c;">Control Finalizado</span>
<span class="t" style="left:161px;top:293px;font-size:6.8px;line-height:8.16px;color:#3e3e3e;transform:matrix(1.0020,0.0006,0,1,0.90,0.72);-webkit-text-stroke:0.12px #3e3e3e;">03/02/2026</span>
<span class="t" style="left:233px;top:293px;font-size:6.8px;line-height:8.16px;color:#3e3e3e;transform:matrix(0.9684,0.0006,0,1,0.05,0.72);-webkit-text-stroke:0.12px #3e3e3e;">00000265</span>
<span class="t" style="left:307px;top:293px;font-size:6.8px;line-height:8.16px;color:#3e3e3e;transform:matrix(0.8522,0.0006,0,1,0.30,0.72);-webkit-text-stroke:0.12px #3e3e3e;">SUCURSAL CENTRAL</span>
<span class="t" style="left:414px;top:293px;font-size:6.8px;line-height:8.16px;color:#3e3e3e;transform:matrix(0.9784,0.0006,0,1,0.60,0.72);-webkit-text-stroke:0.12px #3e3e3e;">10</span>
<span class="t" style="left:460px;top:293px;font-size:6.8px;line-height:8.16px;color:#3e3e3e;transform:matrix(0.9784,0.0006,0,1,0.95,0.72);-webkit-text-stroke:0.12px #3e3e3e;">0</span>
<span class="t" style="left:510px;top:293px;font-size:6.8px;line-height:8.16px;color:#3e3e3e;transform:matrix(0.8571,0.0006,0,1,0.30,0.72);-webkit-text-stroke:0.12px #3e3e3e;">CLIENTE EVENTUAL</span>
<span class="t" style="left:630px;top:293px;font-size:6.8px;line-height:8.16px;color:#3e3e3e;transform:matrix(0.8840,0.0006,0,1,0.50,0.72);-webkit-text-stroke:0.12px #3e3e3e;">Cele y Javi</span>
<span class="t" style="left:738px;top:293px;font-size:6.8px;line-height:8.16px;color:#3e3e3e;transform:matrix(0.8840,0.0006,0,1,0.30,0.72);-webkit-text-stroke:0.12px #3e3e3e;">Cele y Javi</span>
<span class="t" style="left:859px;top:293px;font-size:6.8px;line-height:8.16px;color:#9deead;transform:matrix(1.0000,0.0006,0,1,0.71,0.72);-webkit-text-stroke:0.12px #9deead;">2</span>
<span class="t" style="left:939px;top:293px;font-size:6.8px;line-height:8.16px;color:#9c2f9c;transform:matrix(0.9780,0.0006,0,1,0.40,0.72);-webkit-text-stroke:0.12px #9c2f9c;">Control Finalizado</span>
<span class="t" style="left:161px;top:313px;font-size:6.8px;line-height:8.16px;color:#3e3e3e;transform:matrix(1.0020,0.0006,0,1,0.90,0.96);-webkit-text-stroke:0.12px #3e3e3e;">03/02/2026</span>
<span class="t" style="left:233px;top:313px;font-size:6.8px;line-height:8.16px;color:#3e3e3e;transform:matrix(0.9684,0.0006,0,1,0.05,0.96);-webkit-text-stroke:0.12px #3e3e3e;">00000266</span>
<span class="t" style="left:307px;top:313px;font-size:6.8px;line-height:8.16px;color:#3e3e3e;transform:matrix(0.8522,0.0006,0,1,0.30,0.96);-webkit-text-stroke:0.12px #3e3e3e;">SUCURSAL CENTRAL</span>
<span class="t" style="left:414px;top:313px;font-size:6.8px;line-height:8.16px;color:#3e3e3e;transform:matrix(0.9784,0.0006,0,1,0.60,0.96);-webkit-text-stroke:0.12px #3e3e3e;">10</span>
<span class="t" style="left:460px;top:313px;font-size:6.8px;line-height:8.16px;color:#3e3e3e;transform:matrix(0.9784,0.0006,0,1,0.95,0.96);-webkit-text-stroke:0.12px #3e3e3e;">0</span>
<span class="t" style="left:510px;top:313px;font-size:6.8px;line-height:8.16px;color:#3e3e3e;transform:matrix(0.8571,0.0006,0,1,0.30,0.96);-webkit-text-stroke:0.12px #3e3e3e;">CLIENTE EVENTUAL</span>
<span class="t" style="left:630px;top:313px;font-size:6.8px;line-height:8.16px;color:#3e3e3e;transform:matrix(0.8840,0.0006,0,1,0.50,0.96);-webkit-text-stroke:0.12px #3e3e3e;">Cele y Javi</span>
<span class="t" style="left:738px;top:313px;font-size:6.8px;line-height:8.16px;color:#3e3e3e;transform:matrix(0.8840,0.0006,0,1,0.30,0.96);-webkit-text-stroke:0.12px #3e3e3e;">Cele y Javi</span>
<span class="t" style="left:859px;top:313px;font-size:6.8px;line-height:8.16px;color:#9deead;transform:matrix(1.0000,0.0006,0,1,0.71,0.96);-webkit-text-stroke:0.12px #9deead;">2</span>
<span class="t" style="left:939px;top:313px;font-size:6.8px;line-height:8.16px;color:#9c2f9c;transform:matrix(0.9780,0.0006,0,1,0.40,0.96);-webkit-text-stroke:0.12px #9c2f9c;">Control Finalizado</span>
<span class="t" style="left:161px;top:334px;font-size:6.8px;line-height:8.16px;color:#3e3e3e;transform:matrix(1.0020,0.0006,0,1,0.90,0.20);-webkit-text-stroke:0.12px #3e3e3e;">03/02/2026</span>
<span class="t" style="left:233px;top:334px;font-size:6.8px;line-height:8.16px;color:#3e3e3e;transform:matrix(0.9684,0.0006,0,1,0.05,0.20);-webkit-text-stroke:0.12px #3e3e3e;">00000268</span>
<span class="t" style="left:307px;top:334px;font-size:6.8px;line-height:8.16px;color:#3e3e3e;transform:matrix(0.8522,0.0006,0,1,0.30,0.20);-webkit-text-stroke:0.12px #3e3e3e;">SUCURSAL CENTRAL</span>
<span class="t" style="left:416px;top:334px;font-size:6.8px;line-height:8.16px;color:#3e3e3e;transform:matrix(0.9784,0.0006,0,1,0.45,0.20);-webkit-text-stroke:0.12px #3e3e3e;">1</span>
<span class="t" style="left:460px;top:334px;font-size:6.8px;line-height:8.16px;color:#3e3e3e;transform:matrix(0.9784,0.0006,0,1,0.95,0.20);-webkit-text-stroke:0.12px #3e3e3e;">0</span>
<span class="t" style="left:510px;top:334px;font-size:6.8px;line-height:8.16px;color:#3e3e3e;transform:matrix(0.8571,0.0006,0,1,0.30,0.20);-webkit-text-stroke:0.12px #3e3e3e;">CLIENTE EVENTUAL</span>
<span class="t" style="left:630px;top:334px;font-size:6.8px;line-height:8.16px;color:#3e3e3e;transform:matrix(0.8840,0.0006,0,1,0.50,0.20);-webkit-text-stroke:0.12px #3e3e3e;">Cele y Javi</span>
<span class="t" style="left:738px;top:334px;font-size:6.8px;line-height:8.16px;color:#3e3e3e;transform:matrix(0.8840,0.0006,0,1,0.30,0.20);-webkit-text-stroke:0.12px #3e3e3e;">Cele y Javi</span>
<span class="t" style="left:859px;top:334px;font-size:6.8px;line-height:8.16px;color:#ffa192;transform:matrix(1.0000,0.0006,0,1,0.71,0.20);-webkit-text-stroke:0.12px #ffa192;">3</span>
<span class="t" style="left:939px;top:334px;font-size:6.8px;line-height:8.16px;color:#9c2f9c;transform:matrix(0.9780,0.0006,0,1,0.40,0.20);-webkit-text-stroke:0.12px #9c2f9c;">Control Finalizado</span>
<div class="abs" style="left:134px;top:459.4px;width:890px;height:1px;background:#dadada"></div>
<div class="abs" style="left:829.6px;top:464.2px;width:90px;height:19.2px;border:1px solid #e2e2e2;border-radius:2.5px"></div>
<span class="t" style="left:846px;top:469px;font-size:8.4px;line-height:10.08px;color:#a6a6a6;transform:matrix(0.9201,0.0006,0,1,0.30,0.07);-webkit-text-stroke:0.12px #a6a6a6;">Modificar control</span>
<div class="abs" style="left:924px;top:463.5px;width:91.5px;height:19.5px;border-radius:2px;box-shadow:0 1px 2px rgba(0,0,0,.35)"></div>
<span class="t" style="left:947px;top:468px;font-size:8.4px;line-height:10.08px;color:#333;transform:matrix(0.9109,0.0006,0,1,0.50,0.97);-webkit-text-stroke:0.4px #333;">Iniciar control</span>
<svg class="abs" style="left:0;top:0;pointer-events:none" width="1024" height="488" viewBox="0 0 1024 488" fill="none" stroke="#7a14a8">
<rect x="16.6" y="200.4" width="102.8" height="12.8" stroke-width="1.8"/>
<rect x="148.9" y="221.5" width="14.7" height="12.2" stroke-width="1.8"/>
<path d="M164.5 227.6L254 249.4" stroke-width="1.9"/>
<path d="M259.8 251.4L250 252L252 245.2Z" fill="#7a14a8" stroke="none"/>
<rect x="141.3" y="252.8" width="876.1" height="13.1" stroke-width="2"/>
<path d="M971.9 266.5V450" stroke-width="2"/>
<path d="M967.5 448.9H976.9L972.2 458.6Z" fill="#7a14a8" stroke="none"/>
<rect x="924" y="462.4" width="91.3" height="19.4" stroke-width="2"/>
</svg>
</body></html>
